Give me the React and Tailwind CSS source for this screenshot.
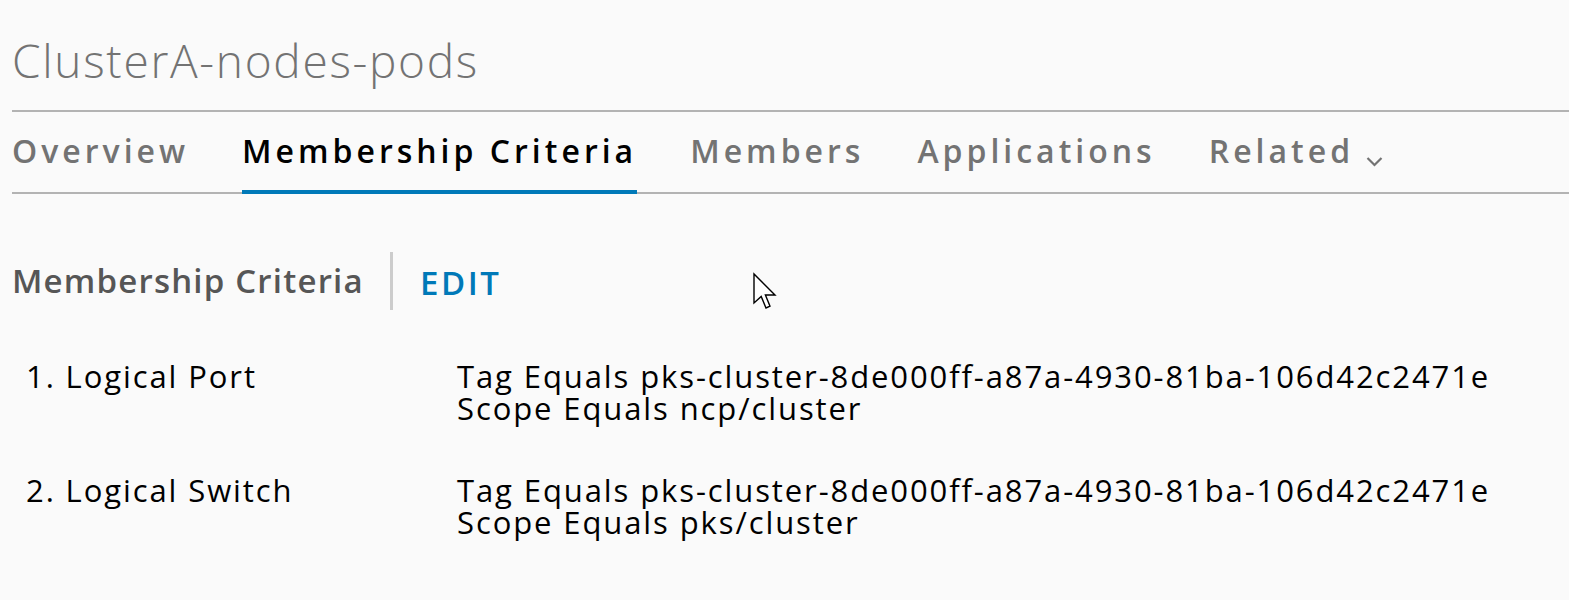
import React from "react";

function Cursor() {
  return (
    <svg className="absolute left-[752px] top-[272px]" width="28" height="40" viewBox="0 0 14 20">
      <path d="M1 1 L1 15.5 L4.6 12.2 L7 18 L9 17.1 L6.7 11.5 L11.5 11.5 Z" fill="#fff" stroke="#000" strokeWidth="0.7" strokeLinejoin="miter" />
    </svg>
  );
}

export default function App() {
  const font = { fontFamily: '"Open Sans", "Liberation Sans", sans-serif' };
  return (
    <div className="relative w-[1569px] h-[600px] bg-[#fafafa] overflow-hidden" style={font}>
      <div className="pl-[12px]">
        <div className="pt-[28px] h-[110px] text-[46px] leading-[64px] tracking-[1.7px] text-[#737373] font-light">
          ClusterA-nodes-pods
        </div>
        <div className="border-t-2 border-b-2 border-[#b3b3b3] h-[84px] flex items-end">
          <div className="flex items-end h-full">
            <Tab label="Overview" />
            <Tab label="Membership Criteria" active />
            <Tab label="Members" />
            <Tab label="Applications" />
            <Tab label="Related" chevron />
          </div>
        </div>
        <div className="mt-[58px] flex items-center h-[58px]">
          <div className="text-[33px] font-semibold tracking-[1.2px] text-[#565656] pr-[26px]">Membership Criteria</div>
          <div className="w-[3px] h-[58px] bg-[#cccccc]" />
          <div className="pl-[27px] pt-[4px] text-[33px] font-semibold text-[#0079b8] tracking-[2.6px]">EDIT</div>
        </div>
        <div className="mt-[50px] pl-[14px] text-[31px] leading-[32px] tracking-[1.9px] text-[#000]">
          <Row n="1. Logical Port" a="Tag Equals pks-cluster-8de000ff-a87a-4930-81ba-106d42c2471e" b="Scope Equals ncp/cluster" />
          <div className="h-[50px]" />
          <Row n="2. Logical Switch" a="Tag Equals pks-cluster-8de000ff-a87a-4930-81ba-106d42c2471e" b="Scope Equals pks/cluster" />
        </div>
      </div>
      <Cursor />
    </div>
  );
}

function Tab({ label, active, chevron }) {
  return (
    <div
      className={
        "relative h-full flex items-center mr-[53px] pb-[2px] text-[32px] font-semibold tracking-[4px] " +
        (active ? "text-black" : "text-[#737373]")
      }
    >
      {label}
      {chevron && (
        <svg className="ml-[12px] mt-[22px]" width="17" height="12" viewBox="0 0 17 12">
          <path d="M1.5 2 L8.5 9 L15.5 2" fill="none" stroke="#737373" strokeWidth="2.2" />
        </svg>
      )}
      {active && <div className="absolute left-0 right-0 bottom-[-2px] h-[4px] bg-[#0079b8]" />}
    </div>
  );
}

function Row({ n, a, b }) {
  return (
    <div className="flex">
      <div className="w-[431px] shrink-0">{n}</div>
      <div>
        <div>{a}</div>
        <div>{b}</div>
      </div>
    </div>
  );
}
